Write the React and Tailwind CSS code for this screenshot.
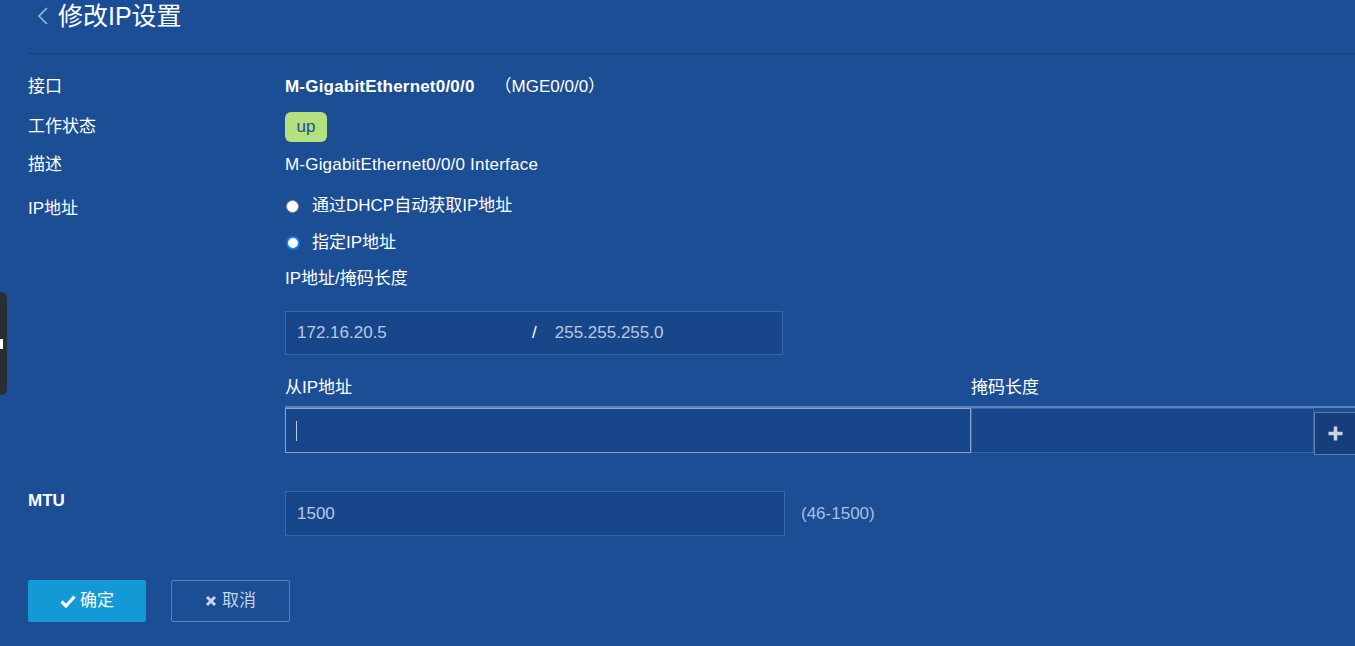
import React from 'react';

const font = { fontFamily: '"Liberation Sans", Arial, "Noto Sans CJK SC", sans-serif' };

const Row = ({ label, children, className = '' }) => (
  <div className={`flex ${className}`}>
    <div className="w-[257px] shrink-0 text-white">{label}</div>
    <div className="flex-1 min-w-0">{children}</div>
  </div>
);

export default function App() {
  return (
    <div className="relative h-[646px] w-[1355px] overflow-hidden bg-[#1b4e94] text-[17px] text-white" style={font}>
      {/* left edge tab */}
      <div className="absolute left-0 top-[292px] flex h-[103px] w-[7px] items-center rounded-r-md bg-[#2a2d31]">
        <div className="h-[10px] w-[3px] bg-white" />
      </div>

      {/* header */}
      <div className="flex h-[32px] items-center pl-[36px]">
        <svg width="14" height="20" viewBox="0 0 14 20" className="mr-[8px]">
          <path d="M11 2 L3 10 L11 18" fill="none" stroke="#9fb6d8" strokeWidth="1.6" />
        </svg>
        <span className="text-[25px] leading-none">修改IP设置</span>
      </div>
      <div className="ml-[28px] mt-[21px] h-px bg-[#163f7a]" />

      <div className="pl-[28px] pt-[23px]">
        <Row label="接口" className="h-[20px] items-center">
          <span className="font-bold tracking-[0.2px]">M-GigabitEthernet0/0/0</span>
          <span className="ml-[20px]">（MGE0/0/0）</span>
        </Row>
        <Row label="工作状态" className="mt-[20px] h-[20px] items-center">
          <span className="inline-flex h-[30px] w-[42px] items-center justify-center rounded-md bg-[#b5e07f] text-[#1b4e94]">up</span>
        </Row>
        <Row label="描述" className="mt-[18px] h-[20px] items-center">
          <span className="tracking-[0.2px]">M-GigabitEthernet0/0/0 Interface</span>
        </Row>
        <Row label="IP地址" className="mt-[21px]">
          <div className="flex h-[20px] items-center">
            <span className="ml-[1px] h-[13px] w-[13px] rounded-full border border-[#888] bg-white" />
            <span className="ml-[13px]">通过DHCP自动获取IP地址</span>
          </div>
          <div className="mt-[17px] flex h-[20px] items-center">
            <span className="ml-[1px] h-[14px] w-[14px] rounded-full border-[2px] border-[#0f7ee6] bg-white" />
            <span className="ml-[12px]">指定IP地址</span>
          </div>
          <div className="mt-[16px] h-[20px] leading-[20px]">IP地址/掩码长度</div>
          <div className="mt-[22px] flex h-[44px] w-[498px] items-center border border-[#3a66a6] bg-[#18468a] text-[#b9c9e2]">
            <span className="ml-[11px] w-[235px]">172.16.20.5</span>
            <span className="text-white">/</span>
            <span className="ml-[18px]">255.255.255.0</span>
          </div>
          <div className="mt-[23px] flex h-[20px] items-center">
            <span className="w-[686px] shrink-0">从IP地址</span>
            <span>掩码长度</span>
          </div>
          <div className="mt-[8px] h-[2px] w-[1100px] bg-[#5a80b8]" />
          <div className="flex w-[1100px]">
            <div className="flex h-[45px] w-[686px] shrink-0 items-center border border-[#8aa4cc] bg-[#18468a]">
              <span className="ml-[10px] h-[20px] w-px bg-[#b9c9e2]" />
            </div>
            <div className="h-[45px] w-[343px] shrink-0 border border-[#3a66a6] bg-[#18468a]" />
            <div className="mt-[4px] flex h-[43px] w-[50px] shrink-0 items-center justify-center border border-[#5a7fb5] bg-[#173e7a]">
              <svg width="17" height="17" viewBox="0 0 17 17" className="mr-[8px]">
                <path d="M8.5 1.5 V15.5 M1.5 8.5 H15.5" stroke="#c8d4e8" strokeWidth="3.5" />
              </svg>
            </div>
          </div>
        </Row>
        <Row label={<span className="relative top-[-3px] font-bold">MTU</span>} className="mt-[36px] items-start">
          <div className="flex items-center">
            <div className="flex h-[45px] w-[500px] items-center border border-[#3a66a6] bg-[#18468a] pl-[11px] text-[#b9c9e2]">1500</div>
            <span className="ml-[16px] text-[#a9bfdf]">(46-1500)</span>
          </div>
        </Row>

        <div className="mt-[44px] flex gap-[25px]">
          <button className="flex h-[42px] w-[118px] items-center justify-center rounded-[2px] bg-[#139ad6] text-[17px] text-white">
            <svg width="16" height="14" viewBox="0 0 16 14" className="mr-[4px]">
              <path d="M1.5 7.5 L6 12 L14.5 2.5" fill="none" stroke="white" strokeWidth="3.2" />
            </svg>
            确定
          </button>
          <button className="flex h-[42px] w-[119px] items-center justify-center rounded-[2px] border border-[#5a7fb5] text-[17px] text-[#c8d4e8]">
            <svg width="12" height="12" viewBox="0 0 12 12" className="mr-[5px]">
              <path d="M2 2 L10 10 M10 2 L2 10" fill="none" stroke="#c8d4e8" strokeWidth="3" />
            </svg>
            取消
          </button>
        </div>
      </div>
    </div>
  );
}
